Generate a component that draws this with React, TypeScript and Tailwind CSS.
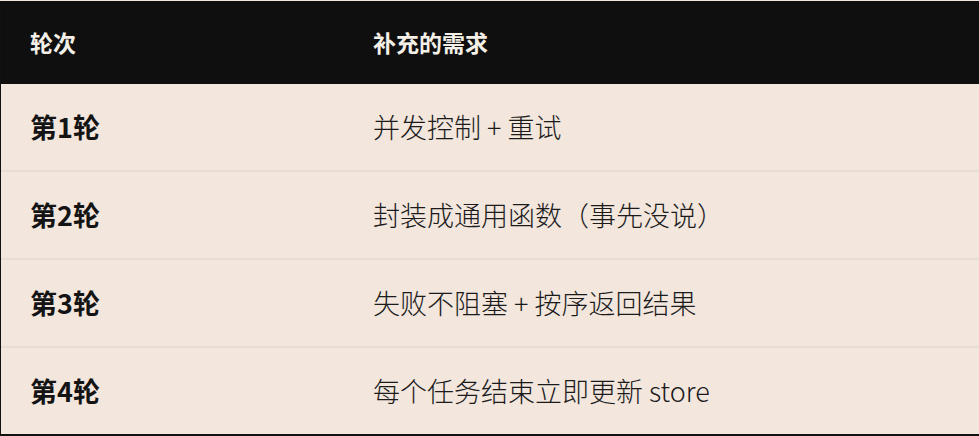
import React from "react";

const rows = [
  { round: "第1轮", req: "并发控制 + 重试" },
  { round: "第2轮", req: "封装成通用函数（事先没说）" },
  { round: "第3轮", req: "失败不阻塞 + 按序返回结果" },
  { round: "第4轮", req: "每个任务结束立即更新 store" },
];

export default function App() {
  return (
    <div
      className="w-[979px] h-[436px] overflow-hidden bg-[#f2e6dd] pt-px"
      style={{ fontFamily: '"Noto Sans CJK SC", "Noto Sans", sans-serif' }}
    >
      <div className="w-[1000px] border-l border-b-2 border-[#111111] bg-[#f2e6dd]">
        <div className="flex h-[83px] items-center bg-[#0f0f0f] text-[23px] font-bold text-[#f4efe7]">
          <div className="w-[372px] shrink-0 pl-[29px]">轮次</div>
          <div className="flex-1">补充的需求</div>
        </div>
        {rows.map((r, i) => (
          <div
            key={r.round}
            className={
              i < rows.length - 1
                ? "flex h-[88px] items-center border-b-2 border-[#e7ddd3] text-[27px] text-[#1b1b1b]"
                : "flex h-[86px] items-center text-[27px] text-[#1b1b1b]"
            }
          >
            <div className="w-[372px] shrink-0 pl-[29px] font-bold text-[#141414]">{r.round}</div>
            <div className="flex-1 font-light">{r.req}</div>
          </div>
        ))}
      </div>
    </div>
  );
}
